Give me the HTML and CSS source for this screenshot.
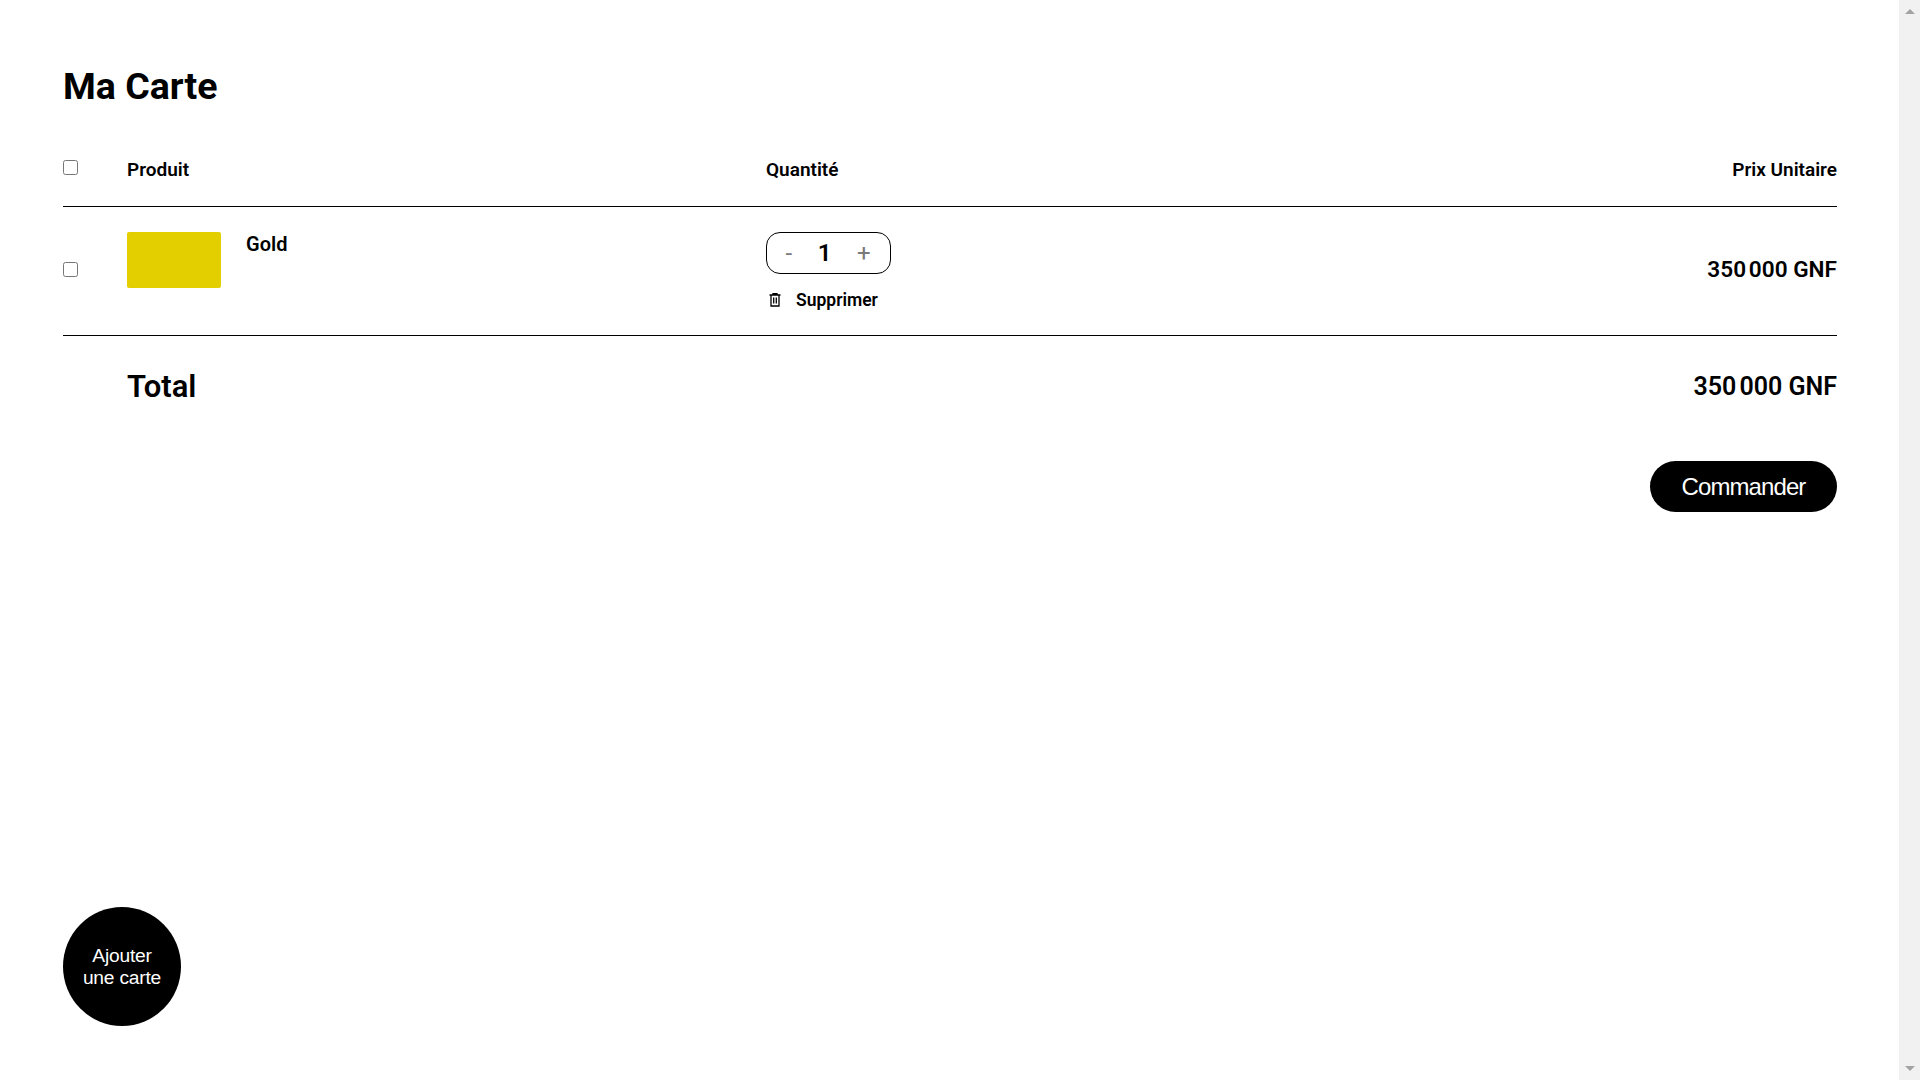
FILE: index.html
```html
<!DOCTYPE html>
<html lang="fr">
<head>
    <meta charset="UTF-8">
    <meta name="viewport" content="width=device-width, initial-scale=1.0">
    <title>Ma Carte</title>
    <link rel="stylesheet" href="styles.css">
</head>
<body>
    <div class="page">
        <main class="cart">
            <h1>Ma Carte</h1>

            <div class="cart-row cart-head">
                <input type="checkbox" aria-label="Tout selectionner">
                <span>Produit</span>
                <span>Quantité</span>
                <span class="price-head">Prix Unitaire</span>
            </div>

            <div class="cart-row cart-item">
                <input type="checkbox" aria-label="Selectionner Gold">
                <div class="product">
                    <div class="thumb"></div>
                    <span class="product-name">Gold</span>
                </div>
                <div class="quantity">
                    <div class="stepper">
                        <button type="button" class="step minus">-</button>
                        <span class="count">1</span>
                        <button type="button" class="step plus">+</button>
                    </div>
                    <button type="button" class="remove">
                        <svg width="14" height="14" viewBox="0 0 14 14" fill="none" stroke="#000" stroke-width="1.300">
                            <path d="M1.500 2h11M5 2V.7h4V2M3 2v11h8V2M5.700 4.500v6M8.300 4.500v6"/>
                        </svg>
                        <span>Supprimer</span>
                    </button>
                </div>
                <div class="price">350&#8239;000 GNF</div>
            </div>

            <div class="total-row">
                <span>Total</span>
                <span>350&#8239;000 GNF</span>
            </div>

            <div class="actions">
                <button type="button" class="order">Commander</button>
            </div>

            <button type="button" class="add-card">Ajouter<br>une carte</button>
        </main>

        <div class="scrollbar">
            <div class="arrow-up"></div>
            <div class="arrow-down"></div>
        </div>
    </div>
</body>
</html>
```

FILE: styles.css
```css
* {
    box-sizing: border-box;
}

body {
    margin: 0;
    font-family: Roboto, sans-serif;
    color: #000;
    background-color: #fff;
}

button {
    border: none;
    background: none;
    padding: 0;
    color: inherit;
    font-family: inherit;
}

.page {
    display: flex;
    height: 1080px;
    overflow: hidden;
}

.cart {
    flex: 1;
    display: flex;
    flex-direction: column;
    padding: 64px 62px 54px 63px;
}

h1 {
    margin: 0 0 2px;
    font-size: 37.5px;
    line-height: 44px;
    font-weight: 700;
}

.cart-row {
    display: grid;
    grid-template-columns: 64px 639px 1fr auto;
    border-bottom: 1px solid #000;
}

.cart-row input {
    width: 15px;
    height: 15px;
    margin: 0;
}

.cart-head {
    height: 97px;
    padding-top: 49px;
    font-size: 19px;
    line-height: 22px;
    font-weight: 600;
}

.cart-head input {
    margin-top: 1px;
}

.price-head {
    text-align: right;
}

.cart-item {
    height: 129px;
    padding-top: 25px;
}

.cart-item input {
    margin-top: 30px;
}

.product {
    display: flex;
    gap: 25px;
}

.thumb {
    width: 94px;
    height: 56px;
    border-radius: 2px;
    background-color: #e3cf00;
}

.product-name {
    padding-top: 1px;
    font-size: 20px;
    line-height: 22px;
    font-weight: 600;
}

.stepper {
    display: flex;
    align-items: center;
    width: 125px;
    height: 42px;
    border: 1px solid #000;
    border-radius: 14px;
}

.step {
    font-size: 24px;
    line-height: 28px;
    color: #7a7a7a;
}

.minus {
    width: 45px;
    padding-right: 1px;
}

.plus {
    width: 53px;
}

.count {
    width: 26px;
    text-align: center;
    font-size: 24px;
    font-weight: 600;
}

.remove {
    display: flex;
    align-items: center;
    gap: 14px;
    margin-top: 15px;
    padding-left: 2px;
    font-size: 17.5px;
    line-height: 22px;
    font-weight: 600;
}

.price {
    margin-top: 24px;
    font-size: 22.6px;
    line-height: 28px;
    font-weight: 600;
    text-align: right;
}

.total-row {
    display: flex;
    justify-content: space-between;
    padding: 34px 0 0 64px;
    font-size: 25px;
    line-height: 34px;
    font-weight: 600;
}

.total-row span:first-child {
    font-size: 31px;
}

.actions {
    display: flex;
    justify-content: flex-end;
    margin-top: 57px;
}

.order {
    width: 187px;
    height: 51px;
    border-radius: 26px;
    background-color: #000;
    color: #fff;
    font-family: "Liberation Sans", Arial, sans-serif;
    font-size: 24px;
    letter-spacing: -0.9px;
}

.add-card {
    width: 118px;
    height: 119px;
    margin-top: auto;
    border-radius: 50%;
    background-color: #000;
    color: #fff;
    font-family: "Liberation Sans", Arial, sans-serif;
    font-size: 19.2px;
    line-height: 22px;
    letter-spacing: -0.2px;
}

.scrollbar {
    display: flex;
    flex-direction: column;
    justify-content: space-between;
    align-items: center;
    width: 21px;
    padding: 9px 0;
    background-color: #f1f1f1;
}

.arrow-up,
.arrow-down {
    width: 0;
    height: 0;
    border-left: 5px solid transparent;
    border-right: 5px solid transparent;
}

.arrow-up {
    border-bottom: 5px solid #a3a3a3;
}

.arrow-down {
    border-top: 5px solid #a3a3a3;
}
```
